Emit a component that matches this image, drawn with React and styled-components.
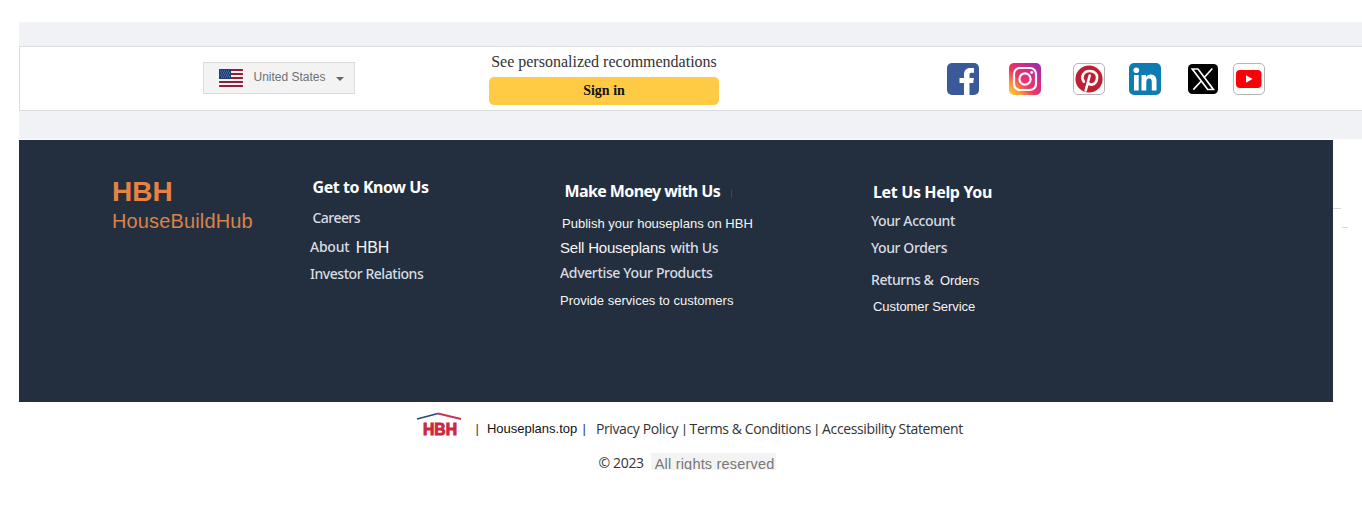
import React from "react";
import styled, { createGlobalStyle } from "styled-components";

const faces = {
  sans: '"Liberation Sans", Arial, sans-serif',
  serif: '"Liberation Serif", "Times New Roman", serif',
  ember: '"Noto Sans", sans-serif',
  open: '"Open Sans", sans-serif',
};

const GlobalStyle = createGlobalStyle`
  body { margin: 0; background: #fff; font-family: ${faces.sans}; }
  * { box-sizing: border-box; }
`;

const Page = styled.div`
  height: 507px;
  padding: 22px 0 0 19px;
  overflow: hidden;
`;

const Band = styled.header`
  height: 117px;
  padding: 24px 0 28px;
  background: #f1f2f6;
`;

const Bar = styled.div`
  display: flex;
  height: 65px;
  border: 1px solid #dadcdd;
  border-right: 0;
  background: #fff;
`;

const Country = styled.button`
  display: flex;
  align-items: center;
  flex: none;
  width: 152px;
  height: 32px;
  margin: 15px 0 0 183px;
  padding: 0 10px 0 15px;
  border: 1px solid #dcdcdc;
  background: #f3f3f3;
`;

const Label = styled.span`
  flex: none;
  white-space: pre;
  line-height: 20px;
  font-family: ${(p) => faces[p.$face || "ember"]};
  font-size: ${(p) => p.$size || 14}px;
  font-weight: ${(p) => p.$weight || 400};
  letter-spacing: ${(p) => p.$track || 0}px;
  color: ${(p) => p.$color || "#d8dce2"};
  margin-left: ${(p) => p.$gap || 0}px;
  padding-top: ${(p) => p.$drop || 0}px;
`;

const Heading = styled(Label)`
  font-size: 16px;
  font-weight: 700;
  color: #fff;
`;

const Link = styled(Label)`
  font-weight: 500;
`;

const CountryName = styled(Label)`
  padding-bottom: 2px;
`;

const Divider = styled(Label)`
  font-family: ${faces.sans};
  font-size: 13px;
  color: #2c4a4c;
`;

const Caret = styled.i`
  margin: 2px 0 0 auto;
  border: 4px solid transparent;
  border-top-color: #666;
  border-bottom: 0;
`;

const SignInBlock = styled.div`
  display: flex;
  flex-direction: column;
  align-items: center;
  flex: none;
  width: 230px;
  margin: 5px 0 0 134px;
`;

const SignInButton = styled.button`
  width: 230px;
  height: 28px;
  margin-top: 5px;
  padding: 0;
  border: 0;
  border-radius: 5px;
  background: #ffcb45;
`;

const Socials = styled.nav`
  display: flex;
  flex: none;
  margin: 16px 0 0 228px;
`;

const SocialIcon = styled.svg`
  display: block;
  flex: none;
  width: 32px;
  height: 32px;
  margin-right: ${(p) => p.$after || 0}px;
`;

const Dark = styled.section`
  display: flex;
  width: 1314px;
  height: 262px;
  margin-top: 1px;
  background: #232f3e;
`;

const Brand = styled.div`
  display: flex;
  flex-direction: column;
  flex: none;
  width: 198px;
  margin: 42px 0 0 93px;
`;

const Column = styled.div`
  flex: none;
  width: ${(p) => p.$width}px;
`;

const Line = styled.div`
  display: flex;
  height: 20px;
  margin: ${(p) => p.$top}px 0 0 ${(p) => p.$indent || 0}px;
`;

const Mark = styled.i`
  width: 1px;
  height: 8px;
  margin: 9px 0 0 11px;
  background: #3e4957;
`;

const Ticks = styled.div`
  display: flex;
  flex: none;
  gap: 1px;
  margin: 68px -15px 0 auto;
`;

const Tick = styled.i`
  width: ${(p) => p.$width}px;
  height: 1px;
  margin-top: ${(p) => p.$top}px;
  background: #d9d9d9;
`;

const Legal = styled.div`
  display: flex;
  height: 42px;
  padding: 9px 0 0 397px;
`;

const RoofLogo = styled.svg`
  display: block;
  flex: none;
  width: 46px;
  height: 28px;
`;

const LegalText = styled.div`
  display: flex;
  padding-top: 8px;
`;

const Copyright = styled.div`
  display: flex;
  padding: 9px 0 0 579.5px;
`;

const Rights = styled.div`
  height: 17px;
  margin-left: 7px;
  padding: 1px 0 0 4px;
  width: 125px;
  overflow: hidden;
  background: #f3f3f3;
`;

const Flag = () => (
  <svg width="24" height="18" viewBox="0 0 24 18">
    <rect width="24" height="18" rx="1.5" fill="#f8eff2" />
    {[0, 4, 8, 12, 16].map((y) => (
      <rect key={y} y={y} width="24" height="2" rx=".5" fill="#8b2137" />
    ))}
    <rect width="12" height="10" rx="1" fill="#1d3c78" />
    {[1.5, 3.5, 5.5, 7.5].map((y, i) => (
      <path key={y} d={`M${1 + (i % 2)} ${y + 0.5}H11`} stroke="#6f87b4" strokeDasharray="1 1" />
    ))}
  </svg>
);

export default function App() {
  return (
    <Page>
      <GlobalStyle />
      <Band>
        <Bar>
          <Country>
            <Flag />
            <CountryName $face="sans" $size={12} $color="#6f7173" $gap={10.5}>United States</CountryName>
            <Caret />
          </Country>
          <SignInBlock>
            <Label $face="serif" $size={16} $color="#333">See personalized recommendations</Label>
            <SignInButton>
              <Label $face="serif" $size={14} $weight={700} $color="#111">Sign in</Label>
            </SignInButton>
          </SignInBlock>
          <Socials>
            <SocialIcon $after={30} viewBox="0 0 32 32">
              <rect width="32" height="32" rx="5" fill="#3b5998" />
              <path d="M17 32V20H12.500v-5H17v-3.500C17 7.300 19.500 5 23.200 5H27v4.800h-2.300c-1.900 0-2.200.9-2.200 2.200v3h4.400l-.7 5h-3.700V32z" fill="#fff" />
            </SocialIcon>
            <SocialIcon $after={32} viewBox="0 0 32 32">
              <defs>
                <linearGradient id="ig" x1="0" y1="1" x2="1" y2="0">
                  <stop offset="0" stopColor="#ffd34a" />
                  <stop offset=".2" stopColor="#fb9a3a" />
                  <stop offset=".42" stopColor="#ee3565" />
                  <stop offset=".65" stopColor="#d92a88" />
                  <stop offset="1" stopColor="#8a2fb5" />
                </linearGradient>
              </defs>
              <rect width="32" height="32" rx="5" fill="url(#ig)" />
              <rect x="5" y="5" width="22" height="22" rx="6" fill="none" stroke="#fff" strokeWidth="2.200" />
              <circle cx="16" cy="16" r="5.600" fill="none" stroke="#fff" strokeWidth="2.200" />
              <circle cx="22.700" cy="9.400" r="1.400" fill="#fff" />
            </SocialIcon>
            <SocialIcon $after={24} viewBox="0 0 32 32">
              <rect x=".5" y=".5" width="31" height="31" rx="4.500" fill="#fff" stroke="#b5b5b5" />
              <circle cx="16" cy="16" r="13.600" fill="#bd2131" />
              <path d="M10.800 18.600C7.300 14 10.500 8 16.500 8c5 0 8 3 7.600 7-.4 4.500-3 6.800-6 6.600-1.600-.1-2.600-1-2.900-1.800M16.700 12.500 12.700 27.500" fill="none" stroke="#fff" strokeWidth="2.600" strokeLinecap="round" />
            </SocialIcon>
            <SocialIcon $after={26} viewBox="0 0 32 32">
              <rect width="32" height="32" rx="5" fill="#0e7bb3" />
              <circle cx="7.300" cy="7.300" r="2.800" fill="#fff" />
              <path d="M5 12h4.700v15.500H5zM12.500 12H17v2.200c.8-1.500 2.500-2.600 4.800-2.600 4.500 0 5.700 3 5.700 7v8.900h-4.700v-8c0-2-.2-4-2.600-4s-2.900 1.900-2.900 3.900v8.100h-4.800z" fill="#fff" />
            </SocialIcon>
            <SocialIcon $after={14} viewBox="0 0 32 32">
              <rect x="1" y="1" width="30" height="30" rx="4.500" fill="#000" />
              <path d="M5.300 6h5.700l15.400 20.500h-5.700zM25.300 5.500l-8.300 9.300M14.300 18l-8 8.700" fill="none" stroke="#fff" strokeWidth="1.700" />
            </SocialIcon>
            <SocialIcon viewBox="0 0 32 32">
              <rect x=".5" y=".5" width="31" height="31" rx="4.500" fill="#fff" stroke="#b5b5b5" />
              <rect x="3" y="7" width="25.500" height="18" rx="4" fill="#fb0007" />
              <path d="M13 12.200v7.600l6.500-3.800z" fill="#fff" />
            </SocialIcon>
          </Socials>
        </Bar>
      </Band>
      <Dark>
        <Brand>
          <Label $face="sans" $size={28} $weight={700} $color="#e68342">HBH</Label>
          <Line $top={9}><Label $face="sans" $size={20} $track={0.14} $color="#d9824c">HouseBuildHub</Label></Line>
        </Brand>
        <Column $width={250}>
          <Line $top={37} $indent={2.5}><Heading $track={-0.42}>Get to Know Us</Heading></Line>
          <Line $top={11} $indent={2.5}><Link $track={-0.55}>Careers</Link></Line>
          <Line $top={9}><Link $track={-0.25}>About</Link><Label $face="sans" $size={16} $track={-0.1} $drop={1} $color="#f5f5f5" $gap={6.5}>HBH</Label></Line>
          <Line $top={7}><Link $track={-0.45}>Investor Relations</Link></Line>
        </Column>
        <Column $width={311}>
          <Line $top={41} $indent={4.5}><Heading $track={-0.6}>Make Money with Us</Heading><Mark /></Line>
          <Line $top={13} $indent={2}><Label $face="sans" $size={13} $color="#f5f5f5">Publish your houseplans on HBH</Label></Line>
          <Line $top={4}><Label $face="sans" $size={15} $track={-0.2} $color="#f5f5f5">Sell Houseplans</Label><Link $gap={5} $track={-0.3}>with Us</Link></Line>
          <Line $top={5}><Link $track={-0.35}>Advertise Your Products</Link></Line>
          <Line $top={8}><Label $face="sans" $size={13} $color="#f5f5f5">Provide services to customers</Label></Line>
        </Column>
        <Column $width={300}>
          <Line $top={42} $indent={2}><Heading $track={-0.36}>Let Us Help You</Heading></Line>
          <Line $top={9}><Link $track={-0.4}>Your Account</Link></Line>
          <Line $top={7}><Link $track={-0.4}>Your Orders</Link></Line>
          <Line $top={12}><Link $track={-0.45}>Returns &amp;</Link><Label $face="sans" $size={13} $track={-0.1} $drop={1} $color="#f5f5f5" $gap={6.5}>Orders</Label></Line>
          <Line $top={7} $indent={2}><Label $face="sans" $size={13} $track={-0.08} $color="#f5f5f5">Customer Service</Label></Line>
        </Column>
        <Ticks><Tick $width={8} $top={0} /><Tick $width={6} $top={19} /></Ticks>
      </Dark>
      <Legal>
        <RoofLogo viewBox="0 0 46 28">
          <path d="M1 8 22 2.500" stroke="#234a78" strokeWidth="1.800" />
          <path d="M22 2.500 45 8" stroke="#c93450" strokeWidth="1.800" />
          <text x="7" y="23.500" fontFamily="Liberation Sans" fontWeight="700" fontSize="16.500" textLength="34" lengthAdjust="spacingAndGlyphs" fill="#cc2640" stroke="#cc2640" strokeWidth="1">HBH</text>
        </RoofLogo>
        <LegalText>
          <Divider $gap={13.5}>|</Divider>
          <Label $face="sans" $size={13} $color="#111" $gap={8}>Houseplans.top</Label>
          <Divider $gap={5.3}>|</Divider>
          <Label $face="open" $track={-0.37} $color="#333" $gap={10}>Privacy Policy</Label>
          <Divider $gap={4.5}>|</Divider>
          <Label $face="open" $track={-0.4} $color="#333" $gap={3.5}>Terms &amp; Conditions</Label>
          <Divider $gap={4}>|</Divider>
          <Label $face="open" $track={-0.38} $color="#333" $gap={3.8}>Accessibility Statement</Label>
        </LegalText>
      </Legal>
      <Copyright>
        <Label $face="open" $track={-0.35} $color="#333">© 2023</Label>
        <Rights><Label $face="sans" $size={14.5} $track={0.2} $color="#777">All rights reserved</Label></Rights>
      </Copyright>
    </Page>
  );
}
